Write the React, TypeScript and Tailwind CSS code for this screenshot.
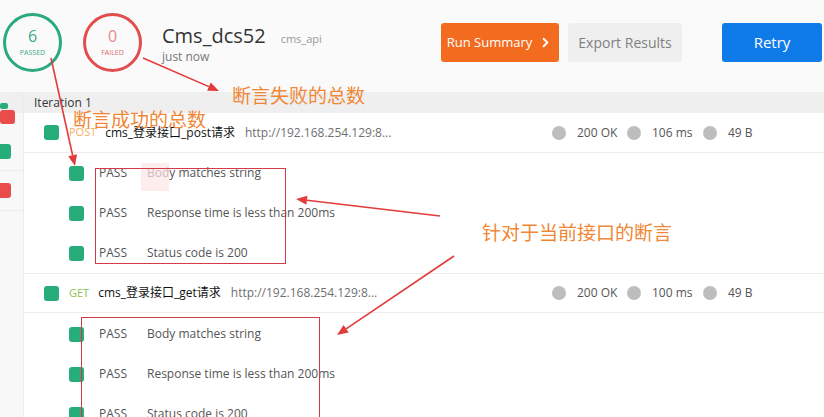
import { ChevronRight } from "lucide-react";

const font = { fontFamily: '"Open Sans", "Noto Sans CJK SC", sans-serif' };

type Assertion = { text: string };
type Req = {
  method: string;
  methodClass: string;
  name: string;
  url: string;
  status: string;
  time: string;
  size: string;
  tests: Assertion[];
};

const requests: Req[] = [
  {
    method: "POST",
    methodClass: "text-[#f5b066]",
    name: "cms_登录接口_post请求",
    url: "http://192.168.254.129:8...",
    status: "200 OK",
    time: "106 ms",
    size: "49 B",
    tests: [
      { text: "Body matches string" },
      { text: "Response time is less than 200ms" },
      { text: "Status code is 200" },
    ],
  },
  {
    method: "GET",
    methodClass: "text-[#8cc152]",
    name: "cms_登录接口_get请求",
    url: "http://192.168.254.129:8...",
    status: "200 OK",
    time: "100 ms",
    size: "49 B",
    tests: [
      { text: "Body matches string" },
      { text: "Response time is less than 200ms" },
      { text: "Status code is 200" },
    ],
  },
];

function Arrow({ x1, y1, x2, y2 }: { x1: number; y1: number; x2: number; y2: number }) {
  const a = Math.atan2(y2 - y1, x2 - x1);
  const len = 11;
  const w = 4.5;
  const bx = x2 - len * Math.cos(a);
  const by = y2 - len * Math.sin(a);
  const px = -Math.sin(a) * w;
  const py = Math.cos(a) * w;
  return (
    <g>
      <line x1={x1} y1={y1} x2={bx} y2={by} stroke="#e23b3b" strokeWidth={1.6} />
      <polygon
        points={`${x2},${y2} ${bx + px},${by + py} ${bx - px},${by - py}`}
        fill="#e23b3b"
      />
    </g>
  );
}

function Stat({ label, w }: { label: string; w: string }) {
  return (
    <div className={`flex items-center ${w}`}>
      <span className="w-[14px] h-[14px] rounded-full bg-[#bdbdbd]" />
      <span className="ml-[11px] text-[12px] text-[#555]">{label}</span>
    </div>
  );
}

function RequestBlock({ req, first }: { req: Req; first: boolean }) {
  return (
    <div>
      <div
        className={`flex items-center h-[40px] border-b border-[#ececec] ${
          first ? "" : "border-t"
        }`}
      >
        <div className="flex items-center flex-1 pl-[20px]">
          <span className="w-[15px] h-[15px] rounded-[3px] bg-[#27ad7a]" />
          <span className={`ml-[10px] text-[11px] ${req.methodClass}`}>{req.method}</span>
          <span className="ml-[9px] text-[12px] text-[#111]">{req.name}</span>
          <span className="ml-[10px] text-[12px] text-[#707070]">{req.url}</span>
        </div>
        <div className="flex w-[272px]">
          <Stat label={req.status} w="w-[75px]" />
          <Stat label={req.time} w="w-[76px]" />
          <Stat label={req.size} w="w-[70px]" />
        </div>
      </div>
      <div className={first ? "pt-0" : "pt-[1px]"}>
        {req.tests.map((t, i) => (
          <div key={i} className="flex items-center h-[40px] pl-[45px]">
            <span className="w-[15px] h-[15px] rounded-[3px] bg-[#27ad7a]" />
            <span className="ml-[15px] w-[48px] text-[12px] text-[#555]">PASS</span>
            <span className="text-[12px] text-[#555]">{t.text}</span>
          </div>
        ))}
      </div>
    </div>
  );
}

export default function App() {
  return (
    <div className="relative w-[824px] h-[417px] overflow-hidden bg-white" style={font}>
      {/* header */}
      <div className="flex items-center h-[92px] pb-[7px] pl-[3px] pr-[2px] bg-[#fafafa]">
        <div className="w-[59px] h-[59px] rounded-full border-[3px] border-[#2aaa7e] flex flex-col items-center justify-center">
          <span className="text-[16px] leading-[18px] text-[#3aa985] mt-[-1px]">6</span>
          <span className="text-[7px] leading-[9px] text-[#3aa985] mt-[3px]">PASSED</span>
        </div>
        <div className="ml-[21px] w-[59px] h-[59px] rounded-full border-[3px] border-[#e24e4e] flex flex-col items-center justify-center">
          <span className="text-[16px] leading-[18px] text-[#e98a86] mt-[-1px]">0</span>
          <span className="text-[7px] leading-[9px] text-[#dc6a6a] mt-[3px]">FAILED</span>
        </div>
        <div className="ml-[20px] flex-1 flex flex-col mt-[3px]">
          <div className="flex items-baseline">
            <span className="text-[20px] leading-[24px] text-[#333]">Cms_dcs52</span>
            <span className="ml-[15px] text-[11px] text-[#999]">cms_api</span>
          </div>
          <span className="text-[12px] leading-[16px] text-[#777] mt-[1px]">just now</span>
        </div>
        <button className="w-[118px] h-[39px] rounded-[3px] bg-[#f26b1f] text-white text-[13px] flex items-center justify-center gap-[6px]">
          Run Summary
          <ChevronRight size={15} strokeWidth={3} />
        </button>
        <button className="ml-[9px] w-[114px] h-[39px] rounded-[3px] bg-[#efefef] text-[#808080] text-[14px]">
          Export Results
        </button>
        <button className="ml-[40px] w-[100px] h-[39px] rounded-[3px] bg-[#0f7be8] text-white text-[15px]">
          Retry
        </button>
      </div>

      {/* body */}
      <div className="flex h-[325px]">
        <div className="w-[24px] bg-[#f8f8f8] border-r border-[#ececec] flex flex-col">
          <div className="h-[21px] bg-[#efefef]" />
          <div className="h-[20px] relative">
            <span className="absolute left-0 top-[-10px] w-[8px] h-[6px] rounded-[2px] bg-[#27ad7a]" />
            <span className="absolute left-0 top-[-3px] w-[15px] h-[14px] rounded-[3px] bg-[#ea4b4b]" />
          </div>
          <div className="h-[38px] border-b border-[#ececec] flex items-center">
            <span className="w-[11px] h-[15px] rounded-r-[3px] bg-[#27ad7a]" />
          </div>
          <div className="h-[40px] border-b border-[#ececec] flex items-center">
            <span className="w-[11px] h-[15px] rounded-r-[3px] bg-[#ea4b4b]" />
          </div>
          <div className="flex-1" />
        </div>
        <div className="flex-1 bg-white">
          <div className="h-[21px] bg-[#efefef] flex items-center pl-[10px]">
            <span className="text-[12px] text-[#333]">Iteration 1</span>
          </div>
          {requests.map((r, i) => (
            <RequestBlock key={i} req={r} first={i === 0} />
          ))}
        </div>
      </div>

      {/* annotations */}
      <span className="absolute left-[141px] top-[163px] w-[28px] h-[28px] bg-[#fce6e6] opacity-70" />
      <div className="absolute left-[95px] top-[168px] w-[191px] h-[96px] border border-[#d23c4a]" />
      <div className="absolute left-[81px] top-[317px] w-[239px] h-[110px] border border-[#d23c4a]" />
      <svg className="absolute left-0 top-0" width={824} height={417}>
        <Arrow x1={51} y1={58} x2={75} y2={166} />
        <Arrow x1={143} y1={58} x2={219} y2={91} />
        <Arrow x1={440} y1={216} x2={296} y2={199} />
        <Arrow x1={454} y1={256} x2={337} y2={335} />
      </svg>
      <span className="absolute left-[232px] top-[83px] text-[19px] leading-[26px] text-[#f08736]">
        断言失败的总数
      </span>
      <span className="absolute left-[73px] top-[107px] text-[19px] leading-[26px] text-[#f08736]">
        断言成功的总数
      </span>
      <span className="absolute left-[482px] top-[220px] text-[19px] leading-[26px] text-[#f08736]">
        针对于当前接口的断言
      </span>
    </div>
  );
}
